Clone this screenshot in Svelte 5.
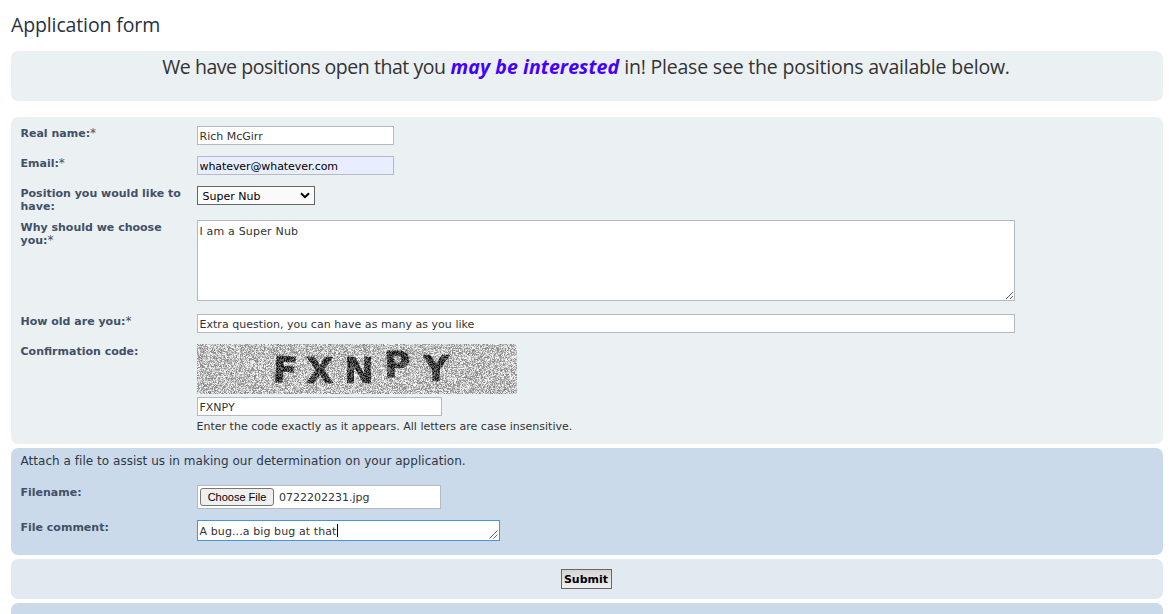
<script>
  import { onMount } from 'svelte';

  let name = $state('Rich McGirr');
  let email = $state('whatever@whatever.com');
  let reason = $state('I am a Super Nub');
  let age = $state('Extra question, you can have as many as you like');
  let code = $state('FXNPY');
  let noise;

  const letters = [
    { c: 'F', x: 76, y: 38.5, r: 4 },
    { c: 'X', x: 109, y: 39, r: 0 },
    { c: 'N', x: 147, y: 38.5, r: 0 },
    { c: 'P', x: 187, y: 33, r: -2 },
    { c: 'Y', x: 226, y: 36.500, r: 0 }
  ];

  onMount(() => {
    const ctx = noise.getContext('2d');
    const image = ctx.createImageData(320, 50);
    let seed = 48271;
    for (let i = 0; i < image.data.length; i += 4) {
      seed = (Math.imul(seed, 1664525) + 1013904223) >>> 0;
      const v = 128 + ((seed >>> 16) & 127);
      image.data[i] = image.data[i + 1] = image.data[i + 2] = v;
      image.data[i + 3] = 255;
    }
    ctx.putImageData(image, 0, 0);
  });
</script>

<main>
  <h2>Application form</h2>

  <section class="panel intro">
    <p><span class="lead">We have positions open that you</span> <em>may be interested</em> <span class="rest">in! Please see the positions available below.</span></p>
  </section>

  <section class="panel fields">
    <div class="row">
      <label for="name">Real name:<i>*</i></label>
      <input id="name" class="short" bind:value={name} />
    </div>
    <div class="row">
      <label for="email">Email:<i>*</i></label>
      <input id="email" class="short filled" bind:value={email} />
    </div>
    <div class="row position">
      <label for="position">Position you would like to have:</label>
      <div class="select" id="position" role="combobox" aria-expanded="false" aria-controls="position" tabindex="0">
        <span>Super Nub</span>
        <svg width="10" height="7" viewBox="0 0 10 7"><path d="M1 1.2 5 5.2 9 1.2" fill="none" stroke="#000" stroke-width="2" /></svg>
      </div>
    </div>
    <div class="row reason">
      <label for="reason">Why should we choose you:<i>*</i></label>
      <textarea id="reason" bind:value={reason}></textarea>
    </div>
    <div class="row">
      <label for="age">How old are you:<i>*</i></label>
      <input id="age" class="wide" bind:value={age} />
    </div>
    <div class="row confirm">
      <label for="code">Confirmation code:</label>
      <div class="stack">
        <div class="captcha">
          <canvas bind:this={noise} width="320" height="50"></canvas>
          <svg width="320" height="50" viewBox="0 0 320 50">
            {#each letters as l}
              <text x={l.x} y={l.y} transform="rotate({l.r} {l.x + 12} {l.y - 13})">{l.c}</text>
            {/each}
          </svg>
        </div>
        <input id="code" class="code" bind:value={code} />
        <span class="hint">Enter the code exactly as it appears. All letters are case insensitive.</span>
      </div>
    </div>
  </section>

  <section class="panel attach">
    <p>Attach a file to assist us in making our determination on your application.</p>
    <div class="row file-row">
      <span class="label">Filename:</span>
      <div class="file"><button type="button">Choose File</button><span>0722202231.jpg</span></div>
    </div>
    <div class="row">
      <span class="label">File comment:</span>
      <div class="comment">
        <span>A bug...a big bug at that</span><b class="caret"></b>
        <svg width="9" height="9" viewBox="0 0 9 9"><path d="M.5 8.5l8-8M4.500 8.500l4-4" stroke="#555" stroke-width=".9" fill="none" /></svg>
      </div>
    </div>
  </section>

  <section class="panel actions"><button type="submit">Submit</button></section>
  <section class="panel next"></section>
</main>

<style>
  :global(body) { background: #fff; overflow: hidden; }
  main {
    box-sizing: border-box;
    height: 614px;
    overflow: hidden;
    padding: 0 9px 0 11px;
    display: flex;
    flex-direction: column;
    font: 11px/13px Verdana, 'DejaVu Sans', sans-serif;
    color: #333;
  }
  h2 {
    margin: 0;
    height: 51px;
    flex: none;
    box-sizing: border-box;
    padding-top: 13px;
    font: 400 19.5px/24px 'Trebuchet MS', 'Open Sans', sans-serif;
    letter-spacing: -.13px;
    color: #28313f;
  }
  .panel { border-radius: 7px; flex: none; box-sizing: border-box; background: #ebf0f3; }
  .intro { height: 50px; margin-bottom: 16px; text-align: center; }
  .intro p { margin: 0; padding: 4px 2px 0 0; font: 400 19.5px/24px 'Trebuchet MS', 'Open Sans', sans-serif; white-space: nowrap; }
  .intro em { color: #40f; font-weight: 700; letter-spacing: .08px; }
  .lead { letter-spacing: -.45px; }
  .rest { letter-spacing: -.2px; }
  .fields { height: 327px; padding: 9px 10px 0 9.5px; margin-bottom: 4px; }
  .row { display: grid; grid-template-columns: 162px 1fr; column-gap: 14.5px; height: 30px; align-items: start; justify-items: start; }
  .row label, .label { font-weight: 700; color: #425067; }
  .row label { padding-top: 1px; }
  .label { padding-top: 1px; }
  i { font-style: normal; font-weight: 400; font-size: 12px; line-height: 1; }
  input, textarea, .file, .comment, .select {
    box-sizing: border-box;
    margin: 0;
    border: 1px solid #b4bac0;
    border-radius: 0;
    background: #fff;
    font: inherit;
    color: #333;
    padding: 2px;
    outline: 0;
  }
  input { height: 19px; padding: 3px 2px 1px 1.5px; }
  .short { width: 197px; }
  .filled { background: #e8eeff; color: #000; letter-spacing: -.08px; }
  .wide { width: 818px; letter-spacing: .03px; }
  .code { width: 245px; margin-top: 3px; }
  .position { height: 34px; }
  .reason { height: 94px; }
  textarea { width: 818px; height: 81px; padding: 4px 1.5px; resize: both; display: block; letter-spacing: .18px; }
  .select { width: 118px; height: 19px; border-color: #666; background: #fafafa; color: #000; padding: 0 4px 0 4.5px; display: flex; align-items: center; justify-content: space-between; }
  .select span { padding-top: 1px; }
  .stack { display: flex; flex-direction: column; }
  .captcha { display: grid; width: 320px; height: 50px; isolation: isolate; }
  .captcha canvas, .captcha svg { grid-area: 1 / 1; display: block; }
  .captcha svg { mix-blend-mode: difference; }
  .captcha text { font: 700 36px 'DejaVu Sans', sans-serif; fill: #808080; stroke: #808080; stroke-width: .6px; }
  .hint { padding-top: 4px; margin-left: -.5px; letter-spacing: .015px; }
  .attach { height: 107px; background: #cadaea; padding: 6px 10px 0 9.5px; margin-bottom: 4px; }
  .attach p { margin: 0; font-size: 12px; line-height: 14px; height: 31px; color: #2f3745; letter-spacing: .035px; }
  .file-row { height: 35px; }
  .file { width: 244px; height: 24px; display: flex; align-items: center; gap: 5px; }
  .file button { box-sizing: border-box; width: 74px; height: 18px; padding: 0; border: 1px solid #767676; border-radius: 3px; background: #efefef; color: #000; font: 11px/14px 'Liberation Sans', Arial, sans-serif; }
  .comment { width: 303px; height: 21px; border-color: #4595d9; display: flex; align-items: center; padding: 0 1px 0 1.5px; }
  .comment span { letter-spacing: .1px; padding-top: 1px; }
  .caret { width: 1px; height: 13px; background: #000; }
  .comment svg { margin-left: auto; align-self: flex-end; margin-bottom: 1px; }
  .actions { height: 40px; background: #e2e9f1; display: flex; justify-content: center; align-items: center; padding-right: 2px; margin-bottom: 4px; }
  .actions button { box-sizing: border-box; width: 51px; height: 20px; padding: 1px 0 0; border: 1px solid #666; border-radius: 0; background: linear-gradient(#d5d5d5, #efefef); color: #000; font: 700 11px/14px Verdana, 'DejaVu Sans', sans-serif; }
  .next { height: 40px; background: #cadaea; }
</style>
